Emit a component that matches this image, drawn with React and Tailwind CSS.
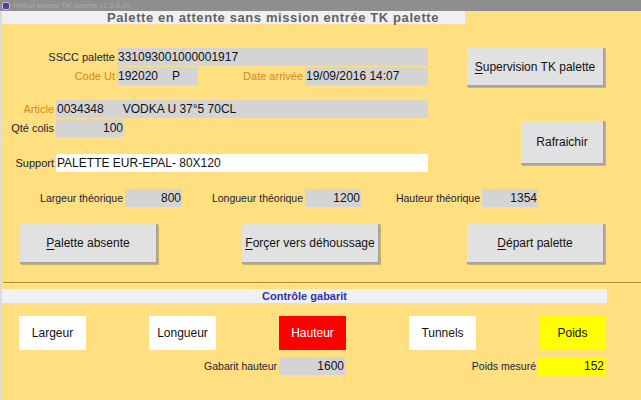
import React from "react";

const Field = ({ w, bg = "bg-[#d4d4d4]", align = "text-left", children }) => (
  <div
    className={`${w} ${bg} ${align} h-[18px] leading-[18px] text-[12px] text-[#111] px-[1px] whitespace-nowrap overflow-hidden`}
  >
    {children}
  </div>
);

const Label = ({ w, color = "text-[#1e1a3a]", size = "text-[11px]", children }) => (
  <div
    className={`${w} ${color} ${size} h-[18px] leading-[18px] text-right pr-[2px] whitespace-nowrap`}
  >
    {children}
  </div>
);

const WinButton = ({ w, h, first, rest, children }) => (
  <button
    type="button"
    className={`${w} ${h} bg-[#e1e1e1] border-r-2 border-b-2 border-[#aaa49b] text-[12px] text-[#111] shadow-[1px_1px_0_#c9b46a]`}
  >
    {first ? (
      <>
        <span className="underline underline-offset-2">{first}</span>
        {rest}
      </>
    ) : (
      children
    )}
  </button>
);

const GaugeBox = ({ bg, color = "text-[#111]", children }) => (
  <div
    className={`w-[67px] h-[34px] ${bg} ${color} text-[12px] flex items-center justify-center`}
  >
    {children}
  </div>
);

export default function App() {
  return (
    <div
      className="w-[641px] h-[400px] overflow-hidden bg-[#ffdf7f] flex flex-col"
      style={{ fontFamily: '"Liberation Sans", Arial, sans-serif' }}
    >
      {/* Title bar */}
      <div className="h-[11px] bg-[#8e8e8e] flex items-center gap-[3px] px-[2px]">
        <div className="w-[8px] h-[8px] rounded-[2px] bg-[#5b3f8c] border border-[#c9b8e8]" />
        <span className="text-[8px] leading-[10px] text-[#ababab]">
          Rebut entrée TK palette (1.0.0.0)
        </span>
      </div>

      <div className="flex-1 flex flex-col border-l-[2px] border-[#dcdcdc]">
        {/* Header */}
        <div className="w-[463px] h-[13px] bg-[#f0f0f4] pl-[105px] text-[13px] leading-[13px] tracking-[0.6px] font-bold text-[#626262] whitespace-nowrap">
          Palette en attente sans mission entrée TK palette
        </div>

        {/* Main form */}
        <div className="flex">
          <div className="w-[428px] flex flex-col pt-[24px]">
            <div className="flex">
              <Label w="w-[115px]">SSCC palette</Label>
              <Field w="w-[311px]">331093001000001917</Field>
            </div>
            <div className="flex mt-[1px]">
              <Label w="w-[115px]" color="text-[#d48a16]">Code Ut</Label>
              <Field w="w-[81px]">
                <span>192020</span>
                <span className="ml-[14px]">P</span>
              </Field>
              <Label w="w-[107px]" color="text-[#d48a16]">Date arrivée</Label>
              <Field w="w-[123px]">19/09/2016 14:07</Field>
            </div>
            <div className="flex mt-[15px]">
              <Label w="w-[54px]" color="text-[#d48a16]">Article</Label>
              <Field w="w-[372px]">
                <span>0034348</span>
                <span className="ml-[19px]">VODKA U 37°5 70CL</span>
              </Field>
            </div>
            <div className="flex mt-[1px]">
              <Label w="w-[54px]">Qté colis</Label>
              <Field w="w-[68px]" align="text-right">100</Field>
            </div>
            <div className="flex mt-[17px]">
              <Label w="w-[54px]">Support</Label>
              <Field w="w-[372px]" bg="bg-white">PALETTE EUR-EPAL- 80X120</Field>
            </div>
          </div>

          <div className="w-[175px] flex flex-col items-end pt-[24px]">
            <WinButton w="w-[138px]" h="h-[39px]" first="S" rest="upervision TK palette" />
            <div className="mt-[34px]">
              <WinButton w="w-[84px]" h="h-[44px]">Rafraichir</WinButton>
            </div>
          </div>
        </div>

        {/* Theoretical dimensions */}
        <div className="flex mt-[17px]">
          <Label w="w-[123px]" size="text-[10.5px]">Largeur théorique</Label>
          <Field w="w-[57px]" align="text-right">800</Field>
          <Label w="w-[123px]" size="text-[10.5px]">Longueur théorique</Label>
          <Field w="w-[56px]" align="text-right">1200</Field>
          <Label w="w-[121px]" size="text-[10.5px]">Hauteur théorique</Label>
          <Field w="w-[56px]" align="text-right">1354</Field>
        </div>

        {/* Action buttons */}
        <div className="flex mt-[17px] pl-[18px]">
          <WinButton w="w-[138px]" h="h-[40px]" first="P" rest="alette absente" />
          <div className="ml-[84px]">
            <WinButton w="w-[138px]" h="h-[40px]" first="F" rest="orçer vers déhoussage" />
          </div>
          <div className="ml-[87px]">
            <WinButton w="w-[138px]" h="h-[40px]" first="D" rest="épart palette" />
          </div>
        </div>

        {/* Separator */}
        <div className="mt-[18px] ml-[1px] h-[2px] bg-[#a58a2c] border-b border-[#ffeaa8]" />

        {/* Gauge control */}
        <div className="mt-[5px] w-[605px] h-[14px] bg-[#f0f0f4] text-center text-[11px] leading-[14px] font-bold text-[#3232a8]">
          Contrôle gabarit
        </div>

        <div className="flex gap-[63px] mt-[13px] pl-[17px]">
          <GaugeBox bg="bg-white">Largeur</GaugeBox>
          <GaugeBox bg="bg-white">Longueur</GaugeBox>
          <GaugeBox bg="bg-[#ff0000]" color="text-white">Hauteur</GaugeBox>
          <GaugeBox bg="bg-white">Tunnels</GaugeBox>
          <GaugeBox bg="bg-[#ffff00]">Poids</GaugeBox>
        </div>

        <div className="flex mt-[7px]">
          <Label w="w-[277px]" size="text-[10.5px]">Gabarit hauteur</Label>
          <Field w="w-[66px]" align="text-right">1600</Field>
          <Label w="w-[193px]" size="text-[10.5px]">Poids mesuré</Label>
          <Field w="w-[67px]" bg="bg-[#ffff00]" align="text-right">152</Field>
        </div>
      </div>
    </div>
  );
}
